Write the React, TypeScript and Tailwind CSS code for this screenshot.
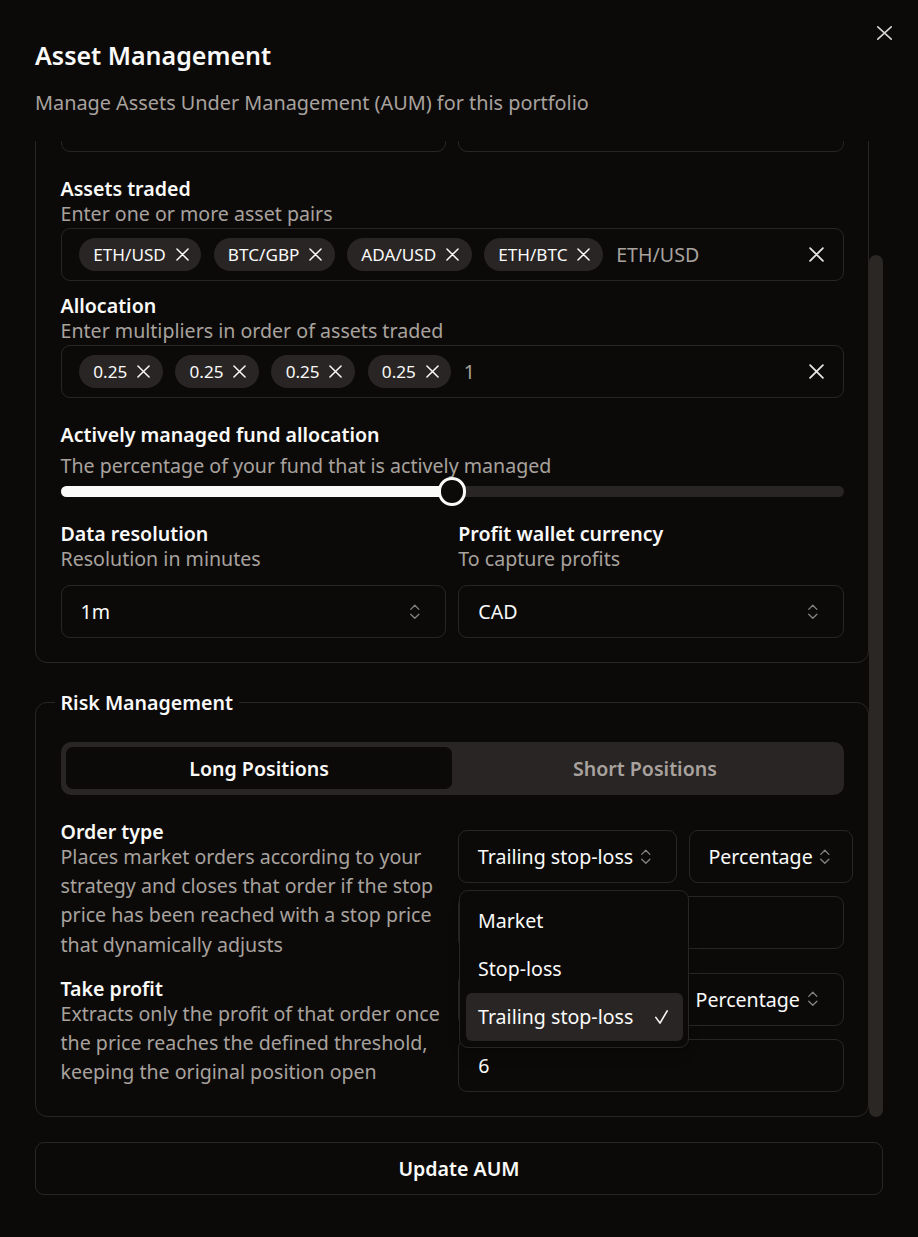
import React from "react";
import { ChevronsUpDown } from "lucide-react";

function Cross({ size, stroke }: { size: number; stroke: number }) {
  const p = stroke / 2 + 0.2;
  const s = size;
  return (
    <svg width={s} height={s} viewBox={`0 0 ${s} ${s}`} fill="none" className="shrink-0">
      <path
        d={`M${p} ${p}L${s - p} ${s - p}M${s - p} ${p}L${p} ${s - p}`}
        stroke="currentColor"
        strokeWidth={stroke}
        strokeLinecap="round"
      />
    </svg>
  );
}

function Chip({ label }: { label: string }) {
  return (
    <span className="flex h-[33px] shrink-0 items-center gap-[9.7px] rounded-full bg-[#292524] pl-[14.3px] pr-[12.7px] text-[17.15px] leading-none text-[#fafaf9]">
      {label}
      <Cross size={13} stroke={1.5} />
    </span>
  );
}

function Label({ children }: { children: React.ReactNode }) {
  return <div className="text-[19.6px] font-semibold leading-[21px] text-[#fafaf9]">{children}</div>;
}

function Desc({ children }: { children: React.ReactNode }) {
  return <div className="text-[19.6px] leading-[29.4px] text-[#a8a29e]">{children}</div>;
}

function Icon() {
  return <ChevronsUpDown size={19.6} strokeWidth={1.6} className="shrink-0 opacity-50" />;
}

function SelectFull({ value }: { value: string }) {
  return (
    <div className="flex h-[53px] w-full items-center justify-between rounded-[9px] border border-[#292524] pl-[19px] pr-[20px] text-[19.6px] text-[#fafaf9]">
      <span>{value}</span>
      <Icon />
    </div>
  );
}

function SelectFit({ value, tight }: { value: string; tight?: boolean }) {
  return (
    <div
      className={
        tight
          ? "flex h-[53px] w-fit shrink-0 items-center gap-[2px] rounded-[9px] border border-[#292524] pl-[18px] pr-[18px] text-[19.6px] whitespace-nowrap text-[#fafaf9]"
          : "flex h-[53px] w-fit shrink-0 items-center gap-[3px] rounded-[9px] border border-[#292524] pl-[18.5px] pr-[20px] text-[19.6px] whitespace-nowrap text-[#fafaf9]"
      }
    >
      <span>{value}</span>
      <Icon />
    </div>
  );
}

function Input({ value }: { value: string }) {
  return (
    <div className="flex h-[53px] w-full items-center rounded-[9px] border border-[#292524] px-[19px] text-[19.6px] text-[#fafaf9]">
      {value}
    </div>
  );
}

function Dropdown() {
  const items = ["Market", "Stop-loss", "Trailing stop-loss"];
  return (
    <div className="absolute left-[1px] top-[calc(100%+7px)] z-20 w-[230px] rounded-[9px] border border-[#292524] bg-[#0c0a09] p-[5.7px] shadow-lg">
      {items.map((it) => {
        const sel = it === "Trailing stop-loss";
        return (
          <div
            key={it}
            className={
              sel
                ? "flex h-[48px] items-center justify-between rounded-[6px] bg-[#292524] pl-[12px] pr-[15px] text-[19.6px] text-[#fafaf9]"
                : "flex h-[48px] items-center justify-between rounded-[6px] pl-[12px] pr-[15px] text-[19.6px] text-[#fafaf9]"
            }
          >
            <span>{it}</span>
            {sel && (
              <svg width="13" height="14" viewBox="0 0 13 14" fill="none">
                <path d="M0.8 7.4L5 13.1L12.2 0.9" stroke="currentColor" strokeWidth="1.6" strokeLinecap="round" strokeLinejoin="round" />
              </svg>
            )}
          </div>
        );
      })}
    </div>
  );
}

export default function App() {
  return (
    <div className="relative h-[1237px] w-[918px] overflow-hidden bg-[#0c0a09] pl-[35px] pr-[35px] pt-[38.3px] font-['Noto_Sans',sans-serif] text-[#fafaf9]">
      <button className="absolute right-[26px] top-[26px] text-[#d6d3d1]">
        <svg width="15" height="14" viewBox="0 0 15 14" fill="none">
          <path d="M0.8 0.8L14.2 13.2M14.2 0.8L0.8 13.2" stroke="currentColor" strokeWidth="1.6" strokeLinecap="round" />
        </svg>
      </button>

      <h1 className="text-[25px] font-semibold leading-[34px]">Asset Management</h1>
      <p className="mt-[16.1px] text-[19.85px] leading-[29.4px] text-[#a8a29e]">
        Manage Assets Under Management (AUM) for this portfolio
      </p>

      <div className="mt-[23px] flex h-[977px] overflow-hidden">
        <div className="min-w-0 flex-1">
          <div className="-mt-[117px]">
            {/* Card 1 */}
            <div className="rounded-[12px] border border-[#292524] px-[24.5px] pb-[24px] pt-[24.5px]">
              <div className="grid grid-cols-2 gap-x-[12.6px]">
                <div>
                  <div className="h-[49.4px]" />
                  <Input value="" />
                </div>
                <div>
                  <div className="h-[49.4px]" />
                  <Input value="" />
                </div>
              </div>

              <div className="mt-[26.3px]">
                <Label>Assets traded</Label>
                <Desc>Enter one or more asset pairs</Desc>
                <div className="flex h-[53px] items-center gap-[12.3px] rounded-[9px] border border-[#292524] pl-[17.5px] pr-[18.5px]">
                  <Chip label="ETH/USD" />
                  <Chip label="BTC/GBP" />
                  <Chip label="ADA/USD" />
                  <Chip label="ETH/BTC" />
                  <span className="ml-[1px] text-[19.6px] text-[#a8a29e]">ETH/USD</span>
                  <span className="ml-auto text-[#e7e5e4]">
                    <Cross size={15} stroke={1.8} />
                  </span>
                </div>
              </div>

              <div className="mt-[13.2px]">
                <Label>Allocation</Label>
                <Desc>Enter multipliers in order of assets traded</Desc>
                <div className="flex h-[53px] items-center gap-[12.5px] rounded-[9px] border border-[#292524] pl-[17.5px] pr-[18.5px]">
                  <Chip label="0.25" />
                  <Chip label="0.25" />
                  <Chip label="0.25" />
                  <Chip label="0.25" />
                  <span className="text-[19.6px] text-[#a8a29e]">1</span>
                  <span className="ml-auto text-[#e7e5e4]">
                    <Cross size={15} stroke={1.8} />
                  </span>
                </div>
              </div>

              <div className="mt-[25.9px]">
                <Label>Actively managed fund allocation</Label>
                <div className="mt-[6.5px]">
                  <Desc>The percentage of your fund that is actively managed</Desc>
                </div>
                <div className="relative -mt-[3.3px] flex h-[28.5px] items-center">
                  <div className="h-[11.5px] w-full overflow-hidden rounded-full bg-[#292524]">
                    <div className="h-full w-1/2 bg-[#fafaf9]" />
                  </div>
                  <div className="absolute left-[calc(50%-14.25px)] top-0 h-[28.5px] w-[28.5px] rounded-full border-[3px] border-[#fafaf9] bg-[#0c0a09]" />
                </div>
              </div>

              <div className="mt-[16.8px] grid grid-cols-2 gap-x-[12.6px]">
                <div>
                  <Label>Data resolution</Label>
                  <Desc>Resolution in minutes</Desc>
                  <div className="mt-[12.3px]">
                    <SelectFull value="1m" />
                  </div>
                </div>
                <div>
                  <Label>Profit wallet currency</Label>
                  <Desc>To capture profits</Desc>
                  <div className="mt-[12.3px]">
                    <SelectFull value="CAD" />
                  </div>
                </div>
              </div>
            </div>

            {/* Risk management */}
            <fieldset className="mt-[24.5px] min-w-0 rounded-[12px] border border-[#292524] px-[24.5px] pb-[24.5px] pt-[24.3px]">
              <legend className="-ml-[6px] px-[6px] text-[19.6px] font-semibold leading-[29.4px]">Risk Management</legend>

              <div className="grid h-[53.4px] grid-cols-2 rounded-[10px] bg-[#292524] p-[5.7px]">
                <div className="flex items-center justify-center rounded-[7px] bg-[#0c0a09] text-[19.6px] font-semibold text-[#fafaf9]">
                  Long Positions
                </div>
                <div className="flex items-center justify-center text-[19.6px] font-semibold text-[#a8a29e]">
                  Short Positions
                </div>
              </div>

              <div className="mt-[25.5px] grid grid-cols-2 items-center gap-x-[12.6px] gap-y-[13.5px]">
                <div>
                  <Label>Order type</Label>
                  <Desc>
                    Places market orders according to your strategy and closes that order if the stop price has been
                    reached with a stop price that dynamically adjusts
                  </Desc>
                </div>
                <div className="flex min-w-0 flex-col gap-[13px]">
                  <div className="flex gap-[12.6px]">
                    <div className="relative shrink-0">
                      <SelectFit value="Trailing stop-loss" />
                      <Dropdown />
                    </div>
                    <SelectFit value="Percentage" tight />
                  </div>
                  <Input value="" />
                </div>

                <div>
                  <Label>Take profit</Label>
                  <Desc>
                    Extracts only the profit of that order once the price reaches the defined threshold, keeping the
                    original position open
                  </Desc>
                </div>
                <div className="flex min-w-0 flex-col gap-[13px]">
                  <div className="flex gap-[12.6px]">
                    <div className="min-w-0 flex-1">
                      <SelectFull value="" />
                    </div>
                    <SelectFit value="Percentage" />
                  </div>
                  <Input value="6" />
                </div>
              </div>
            </fieldset>
          </div>
        </div>
        <div className="w-[14px] shrink-0">
          <div className="mt-[114px] h-[862px] rounded-full bg-[#2b2725]" />
        </div>
      </div>

      <button className="mt-[24.3px] flex h-[53.4px] w-full items-center justify-center rounded-[9px] border border-[#292524] text-[19.6px] font-semibold text-[#fafaf9]">
        Update AUM
      </button>
    </div>
  );
}
